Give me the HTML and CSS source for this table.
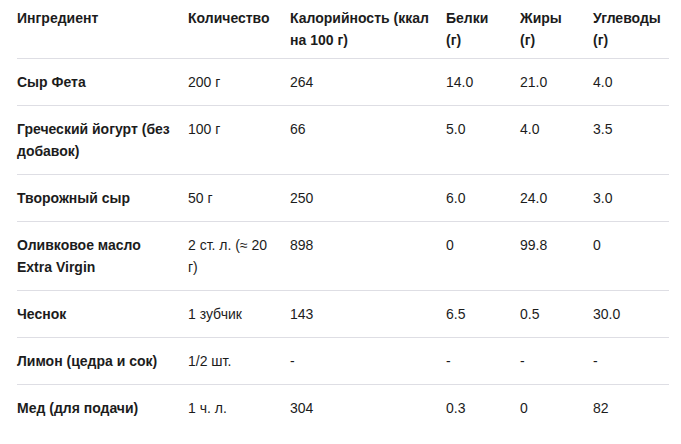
FILE: index.html
```html
<!DOCTYPE html>
<html lang="ru">
<head>
<meta charset="utf-8">
<link rel="stylesheet" href="styles.css">
</head>
<body>
<div class="wrap">
<table class="nutri">
<colgroup>
<col class="c1"><col class="c2"><col class="c3"><col class="c4"><col class="c5"><col class="c6">
</colgroup>
<thead>
<tr><th>Ингредиент</th><th>Количество</th><th>Калорийность (ккал на 100 г)</th><th>Белки (г)</th><th>Жиры (г)</th><th>Углеводы (г)</th></tr>
</thead>
<tbody>
<tr><td class="name">Сыр Фета</td><td>200 г</td><td>264</td><td>14.0</td><td>21.0</td><td>4.0</td></tr>
<tr><td class="name">Греческий йогурт (без добавок)</td><td>100 г</td><td>66</td><td>5.0</td><td>4.0</td><td>3.5</td></tr>
<tr><td class="name">Творожный сыр</td><td>50 г</td><td>250</td><td>6.0</td><td>24.0</td><td>3.0</td></tr>
<tr><td class="name">Оливковое масло Extra Virgin</td><td>2 ст. л. (≈ 20 г)</td><td>898</td><td>0</td><td>99.8</td><td>0</td></tr>
<tr><td class="name">Чеснок</td><td>1 зубчик</td><td>143</td><td>6.5</td><td>0.5</td><td>30.0</td></tr>
<tr><td class="name">Лимон (цедра и сок)</td><td>1/2 шт.</td><td>-</td><td>-</td><td>-</td><td>-</td></tr>
<tr><td class="name">Мед (для подачи)</td><td>1 ч. л.</td><td>304</td><td>0.3</td><td>0</td><td>82</td></tr>
</tbody>
</table>
</div>
</body>
</html>
```
FILE: styles.css
```css
html, body {
  margin: 0;
  padding: 0;
  background: #ffffff;
}
.wrap {
  padding: 0 12px 0 17px;
}
.nutri {
  width: 652px;
  table-layout: fixed;
  border-collapse: collapse;
  font-family: "Liberation Sans", Arial, sans-serif;
  font-size: 14px;
  line-height: 22px;
  color: #1c1c1c;
}
.c1 { width: 171px; }
.c2 { width: 102px; }
.c3 { width: 156px; }
.c4 { width: 74px; }
.c5 { width: 73px; }
.c6 { width: 76px; }
.nutri th,
.nutri td {
  text-align: left;
  vertical-align: top;
  padding: 12px 14px 12px 0;
  border-bottom: 1px solid #dedee4;
}
.nutri th {
  font-weight: bold;
  padding-top: 7px;
  padding-bottom: 7px;
}
.nutri td.name {
  font-weight: bold;
}
.nutri tbody tr:last-child td {
  border-bottom: none;
}
```
